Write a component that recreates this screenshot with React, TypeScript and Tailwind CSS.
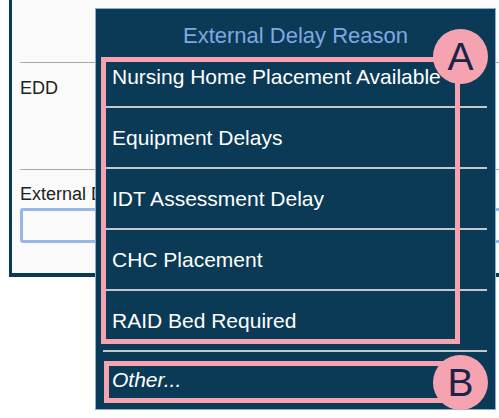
import React from "react";

const items = [
  "Nursing Home Placement Available",
  "Equipment Delays",
  "IDT Assessment Delay",
  "CHC Placement",
  "RAID Bed Required",
];

export default function App() {
  return (
    <div
      className="relative w-[499px] h-[418px] overflow-hidden bg-white"
      style={{ fontFamily: '"Liberation Sans", Arial, sans-serif' }}
    >
      {/* background form panel */}
      <div className="ml-[9px] w-[600px] h-[277px] border-l-[3px] border-b-[4px] border-[#0b3a56] bg-[#fafafa] pl-[8px] flex flex-col">
        <div className="h-[62px]" />
        <div className="h-px bg-[#a8a8a8]" />
        <div className="h-[106px] pt-[15px] text-[18px] leading-[20px] text-[#222]">EDD</div>
        <div className="h-px bg-[#a8a8a8]" />
        <div className="pt-[14px] text-[18px] leading-[20px] text-[#222]">External Delay Reason</div>
        <div className="mt-[4px] h-[35px] w-[560px] rounded-[3px] border-[3px] border-[#98b6e6] bg-[#fafafa]" />
      </div>

      {/* popup */}
      <div className="absolute left-[95px] top-[8px] w-[401px] h-[402px] border border-[#8aaadc] bg-[#0b3a56] text-white flex flex-col">
        <div className="h-[38px] pt-[15px] text-center text-[22px] leading-[24px] text-[#80a7e2]">
          External Delay Reason
        </div>
        {items.map((t) => (
          <div key={t} className="h-[61px] flex flex-col">
            <div className="flex-1 flex items-center pl-[16px] text-[21px] leading-[24px]">{t}</div>
            <div className="ml-[7px] mr-[8px] h-[2px] bg-[#c4c8cb]" />
          </div>
        ))}
        <div className="h-[56px] flex items-center pl-[16px] text-[21px] leading-[24px] italic">Other...</div>
      </div>

      {/* annotation A */}
      <div className="absolute left-[101px] top-[57px] w-[359px] h-[287px] border-[5px] border-[#f5a3b1]" />
      <div className="absolute left-[433px] top-[29px] w-[55px] h-[55px] rounded-full bg-[#f5a3b1] flex items-center justify-center text-[39px] leading-none text-[#1b2448]">
        A
      </div>

      {/* annotation B */}
      <div className="absolute left-[104px] top-[361px] w-[356px] h-[42px] border-[5px] border-[#f5a3b1]" />
      <div className="absolute left-[433px] top-[355px] w-[55px] h-[55px] rounded-full bg-[#f5a3b1] flex items-center justify-center text-[39px] leading-none text-[#1b2448]">
        B
      </div>
    </div>
  );
}
